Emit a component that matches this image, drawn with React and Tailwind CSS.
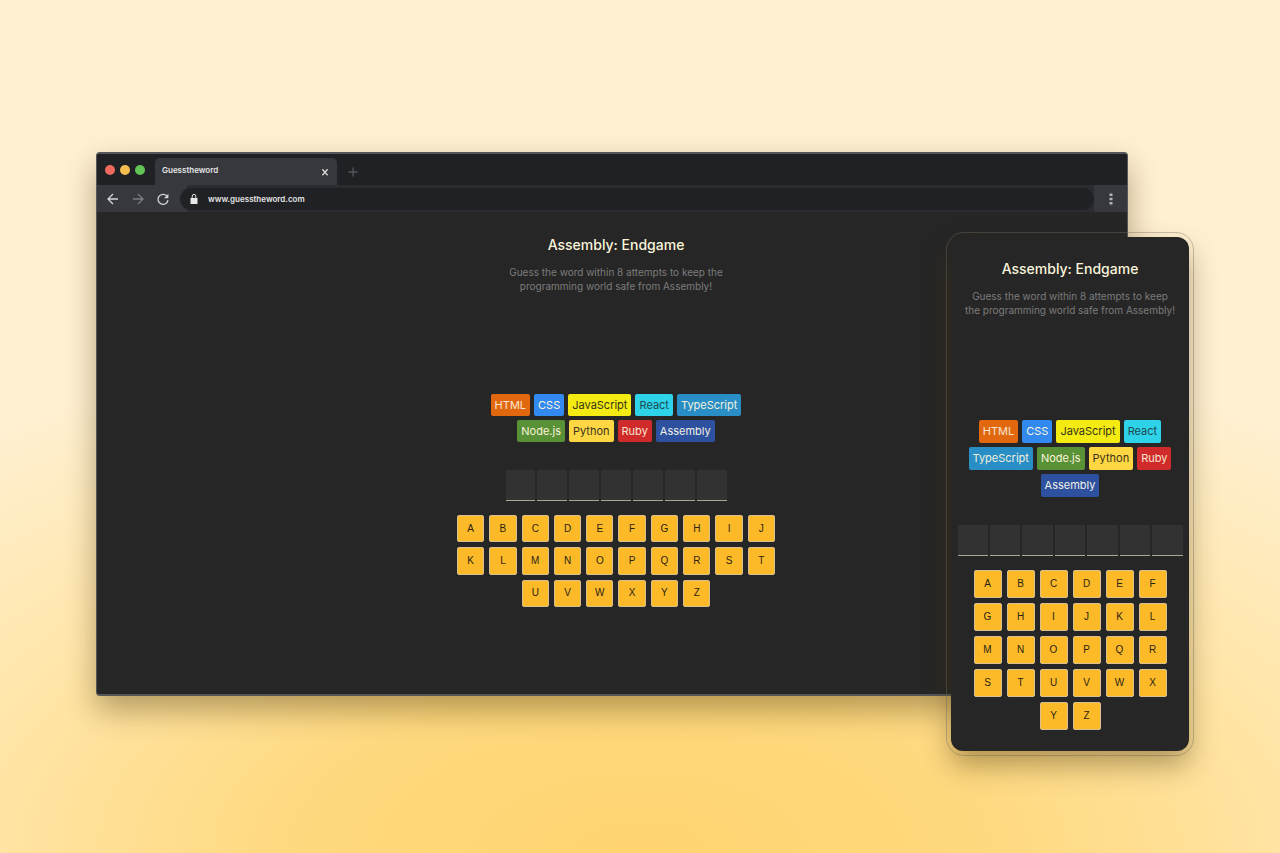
import { Fragment } from "react";

const languages = [
  { name: "HTML", color: "bg-[#e2680f] text-[#f9e6cf]" },
  { name: "CSS", color: "bg-[#328af1] text-[#f9f4da]" },
  { name: "JavaScript", color: "bg-[#f4eb13] text-[#35331a]" },
  { name: "React", color: "bg-[#2ed3e9] text-[#1e4a50]" },
  { name: "TypeScript", color: "bg-[#298ec6] text-[#f0f0dc]" },
  { name: "Node.js", color: "bg-[#599137] text-[#f9f4da]" },
  { name: "Python", color: "bg-[#ffd742] text-[#3a331c]" },
  { name: "Ruby", color: "bg-[#d02b2b] text-[#f9e4d0]" },
  { name: "Assembly", color: "bg-[#2d519f] text-[#f0f0e4]" },
];

const letters = "ABCDEFGHIJKLMNOPQRSTUVWXYZ".split("");
const slots = [1, 2, 3, 4, 5, 6, 7];

const layouts = {
  desktop: {
    header: "w-[228px]",
    chips: "mt-[101px] w-[260px]",
    chip: "h-[22px]",
    word: "w-[221px]",
    keys: "w-[318px] grid-cols-10",
    lastRow: "U",
  },
  mobile: {
    header: "w-[213px]",
    chips: "mt-[103px] w-[220px]",
    chip: "h-[23px]",
    word: "w-[225px]",
    keys: "w-[193px] grid-cols-6",
    lastRow: "Y",
  },
};

function Game({ layout }) {
  const l = layouts[layout];
  return (
    <div className="flex flex-col items-center">
      <header className={`text-center ${l.header}`}>
        <h1 className="text-[14px] leading-5 font-medium text-[#f9f4da]">Assembly: Endgame</h1>
        <p className="mt-[10px] text-[10px] leading-[14px] text-[#7c7c7c]">
          Guess the word within 8 attempts to keep the programming world safe from Assembly!
        </p>
      </header>
      <ul className={`flex flex-wrap justify-center gap-1 text-[11px] ${l.chips}`}>
        {languages.map((lang) => (
          <li key={lang.name} className={`flex items-center rounded-[2px] px-1 ${l.chip} ${lang.color}`}>
            {lang.name}
          </li>
        ))}
      </ul>
      <div className={`mt-7 grid grid-cols-7 gap-[2px] ${l.word}`}>
        {slots.map((slot) => (
          <span key={slot} className="h-[31px] border-b border-[#aaa793] bg-[#323232]" />
        ))}
      </div>
      <div className={`mt-[14px] grid gap-[5px] ${l.keys}`}>
        {letters.map((letter) => (
          <button
            key={letter}
            type="button"
            className={`flex aspect-square items-center justify-center rounded-[2px] border border-[#d7c193] bg-[#fcba29] pb-px font-['Liberation_Sans',sans-serif] text-[10px] text-[#2b2411] ${
              letter === l.lastRow ? "col-start-3" : ""
            }`}
          >
            {letter}
          </button>
        ))}
      </div>
    </div>
  );
}

function IconButton({ label, className, children }) {
  return (
    <button type="button" aria-label={label} className={`flex items-center justify-center ${className}`}>
      <svg viewBox="0 0 12 12" className="size-3" fill="none" stroke="currentColor" strokeWidth="1.3">
        {children}
      </svg>
    </button>
  );
}

function BrowserBar() {
  return (
    <Fragment>
      <div className="flex h-[31px] items-end bg-[#202125] pl-2">
        <div className="flex h-[31px] items-center gap-[5px]">
          <span className="size-[10px] rounded-full bg-[#ee6a5f]" />
          <span className="size-[10px] rounded-full bg-[#f5bd4f]" />
          <span className="size-[10px] rounded-full bg-[#61c454]" />
        </div>
        <div className="ml-[10px] flex h-[27px] w-[182px] items-center justify-between rounded-t-[5px] bg-[#37383d] pr-[6px] pl-[7px]">
          <span className="pb-1 text-[8px] font-semibold text-[#e6e6e6]">Guesstheword</span>
          <IconButton label="Close tab" className="text-[#d8d8d8]">
            <path d="M3.4 3.2 8.6 9.2M8.6 3.2 3.4 9.2" />
          </IconButton>
        </div>
        <IconButton label="New tab" className="ml-[10px] h-[27px] text-[#55565a]">
          <path d="M6 1.5v9M1.5 6h9" />
        </IconButton>
      </div>
      <div className="flex h-[27px] items-center bg-linear-to-r from-[#37383d] from-[90px] to-[#2b2c30] to-[90px]">
        <div className="flex h-full items-center gap-[13px] pl-[10px]">
          <IconButton label="Back" className="text-[#d5d5d7]">
            <path d="M11 6H1.2M6 1 1 6l5 5" />
          </IconButton>
          <IconButton label="Forward" className="text-[#7b7c80]">
            <path d="M1 6h9.8M6 1l5 5-5 5" />
          </IconButton>
          <IconButton label="Reload" className="text-[#d5d5d7]">
            <path d="M9.8 3A5 5 0 1 0 11 7.2" />
            <path d="M11.4.8v4.4H7z" fill="currentColor" stroke="none" />
          </IconButton>
        </div>
        <label className="ml-[11px] flex h-[22px] min-w-0 flex-1 items-center gap-[10px] rounded-full bg-[#202125] pl-[10px]">
          <svg viewBox="0 0 8 12" className="h-3 w-2 shrink-0 text-[#e8e8e8]" fill="currentColor">
            <path d="M.5 5h7v6h-7z" />
            <path d="M2.2 5V3.2a1.8 1.8 0 0 1 3.6 0V5" fill="none" stroke="currentColor" />
          </svg>
          <input
            type="text"
            aria-label="Address"
            defaultValue="www.guesstheword.com"
            className="w-full bg-transparent text-[8px] font-semibold text-[#e6e6e6] outline-none"
          />
        </label>
        <button
          type="button"
          aria-label="Browser menu"
          className="flex h-full w-[33px] items-center justify-center bg-[#37383d] text-[#b4b4b8]"
        >
          <svg viewBox="0 0 4 12" className="h-3 w-1" fill="currentColor">
            <path d="M.5.5h3V3h-3zM.5 4.7h3v2.6h-3zM.5 9h3v2.5h-3z" />
          </svg>
        </button>
      </div>
    </Fragment>
  );
}

export default function App() {
  return (
    <main className="min-h-screen overflow-hidden bg-[radial-gradient(ellipse_85%_62%_at_50%_100%,#ffd470_0%,#ffd97f_32%,#ffe6ab_65%,#fff0d2_100%)] pt-[152px] pr-[152px] pb-[99px] pl-24 font-['Inter',sans-serif]">
      <div className="relative">
        <section className="overflow-hidden rounded-[4px] border-x border-t-2 border-b-2 border-[#54565a] bg-[#262626] pb-[87px] shadow-[0_14px_30px_rgba(70,50,10,0.4)]">
          <BrowserBar />
          <div className="pt-[23px] pl-2">
            <Game layout="desktop" />
          </div>
        </section>
        <section className="absolute top-[80px] -right-[66px] rounded-[18px] border border-[#77746b]/40 p-1">
          <div className="w-[238px] rounded-[12px] bg-[#262626] pt-[22px] pb-[21px] shadow-[0_14px_28px_rgba(70,50,10,0.42)]">
            <Game layout="mobile" />
          </div>
        </section>
      </div>
    </main>
  );
}
